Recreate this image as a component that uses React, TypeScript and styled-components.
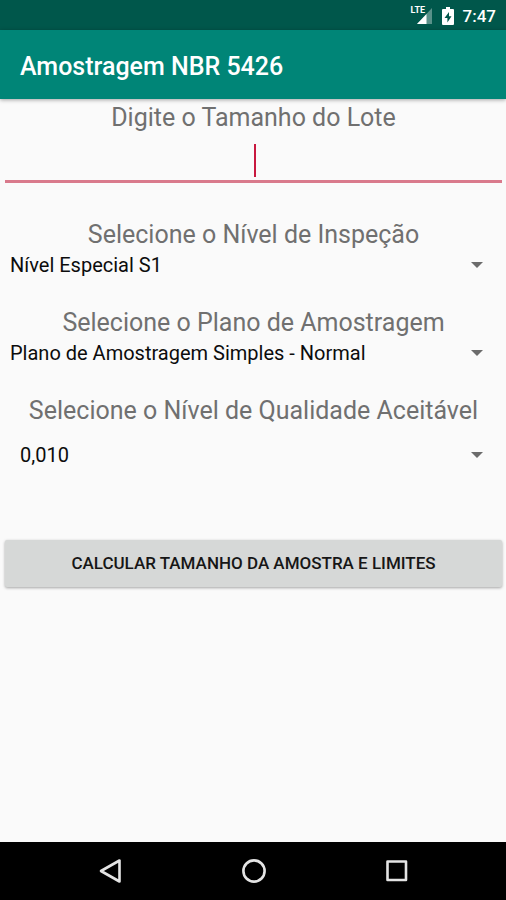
import React, { useState } from "react";
import styled, { createGlobalStyle } from "styled-components";

const GlobalStyle = createGlobalStyle`
  * { box-sizing: border-box; }
  body { margin: 0; background: #fafafa; font-family: Roboto, sans-serif; }
  button, input, select { font-family: inherit; margin: 0; }
`;

const Screen = styled.div`
  min-height: 100vh;
  display: flex;
  flex-direction: column;
`;

const StatusBar = styled.div`
  height: 30px;
  padding: 2px 10px 0;
  display: flex;
  align-items: center;
  justify-content: flex-end;
  gap: 9px;
  background: #00574b;
  color: #fff;
`;

const Clock = styled.time`
  font-size: 17px;
  line-height: 28px;
  font-weight: 500;
`;

const AppBar = styled.header`
  height: 69px;
  padding: 4px 20px 0;
  display: flex;
  align-items: center;
  background: #008577;
  box-shadow: 0 1px 4px rgba(0, 0, 0, 0.35);
`;

const Title = styled.h1`
  margin: 0;
  color: #fff;
  font-size: 25px;
  line-height: 32px;
  font-weight: 500;
`;

const Form = styled.form`
  flex: 1;
  display: flex;
  flex-direction: column;
  gap: 28px;
  padding: 3px 4px 0 5px;
`;

const Field = styled.div`
  display: flex;
  flex-direction: column;
`;

const Label = styled.label`
  color: #707070;
  font-size: 25px;
  line-height: 32px;
  text-align: center;
`;

const InputWrap = styled.div`
  position: relative;
  margin-bottom: 8px;
`;

const Input = styled.input`
  display: block;
  width: 100%;
  height: 49px;
  border: 0;
  border-bottom: 3px solid #d97a8c;
  outline: 0;
  background: transparent;
  color: #000;
  caret-color: transparent;
  font-size: 22px;
  text-align: center;
`;

const Caret = styled.span`
  position: absolute;
  top: 10px;
  left: 50%;
  width: 2px;
  height: 33px;
  background: #c8183f;
  pointer-events: none;
`;

const SelectWrap = styled.div<{ $tall?: boolean }>`
  position: relative;
  display: flex;
  align-items: center;
  height: ${(p) => (p.$tall ? "56px" : "28px")};
`;

const Select = styled.select<{ $inset?: boolean }>`
  appearance: none;
  width: 100%;
  height: 100%;
  padding: 0 40px 0 ${(p) => (p.$inset ? "15px" : "5px")};
  border: 0;
  outline: 0;
  background: transparent;
  color: #0c0c0c;
  font-size: 20px;
`;

const Arrow = styled.svg`
  position: absolute;
  right: 19px;
  width: 12px;
  height: 6px;
  fill: #6b6b6b;
  pointer-events: none;
`;

const Submit = styled.button`
  height: 47px;
  margin-top: 29px;
  padding: 0 8px 2px;
  border: 0;
  border-radius: 2px;
  background: #d6d8d7;
  box-shadow: 0 1px 3px rgba(0, 0, 0, 0.35);
  color: #161616;
  font-size: 17px;
  font-weight: 500;
  text-transform: uppercase;
`;

const NavBar = styled.nav`
  height: 58px;
  padding: 0 38px 0 40px;
  display: grid;
  grid-template-columns: repeat(3, 1fr);
  background: #000;
`;

const NavButton = styled.button`
  display: flex;
  align-items: center;
  justify-content: center;
  padding: 0;
  border: 0;
  background: transparent;

  svg {
    fill: none;
    stroke: #e4e4e4;
    stroke-width: 2.6;
    stroke-linejoin: round;
  }
`;

const StatusIcon = styled.svg`
  display: block;
`;

type PickerProps = { id: string; label: string; options: string[]; tall?: boolean };

function Picker({ id, label, options, tall }: PickerProps) {
  return (
    <Field>
      <Label htmlFor={id}>{label}</Label>
      <SelectWrap $tall={tall}>
        <Select id={id} $inset={tall}>
          {options.map((o) => (
            <option key={o}>{o}</option>
          ))}
        </Select>
        <Arrow viewBox="0 0 12 6" aria-hidden="true">
          <path d="M0 0h12L6 6z" />
        </Arrow>
      </SelectWrap>
    </Field>
  );
}

const NetworkType = styled.span`
  position: absolute;
  top: -1px;
  left: 0;
  font-size: 9px;
  line-height: 10px;
  font-weight: 700;
`;

const Signal = styled.span`
  position: relative;
  display: block;
`;

export default function App() {
  const [lot, setLot] = useState("");
  return (
    <>
      <GlobalStyle />
      <Screen>
        <StatusBar>
          <Signal>
            <StatusIcon width="22" height="20" viewBox="0 0 22 20" aria-hidden="true">
              <path d="M21 2v16H6z" fill="#fff" opacity="0.35" />
              <path d="M15.500 8V18H6z" fill="#fff" />
            </StatusIcon>
            <NetworkType>LTE</NetworkType>
          </Signal>
          <StatusIcon width="12" height="19" viewBox="0 0 12 19" aria-label="Bateria">
            <path
              fillRule="evenodd"
              fill="#fff"
              d="M4 0h4v2h3q1 0 1 1v14q0 1-1 1H1q-1 0-1-1V3q0-1 1-1h3zM7 5L2.500 11H5.400V15.500L9.500 9.300H7z"
            />
          </StatusIcon>
          <Clock>7:47</Clock>
        </StatusBar>
        <AppBar>
          <Title>Amostragem NBR 5426</Title>
        </AppBar>
        <Form onSubmit={(e) => e.preventDefault()}>
          <Field>
            <Label htmlFor="lote">Digite o Tamanho do Lote</Label>
            <InputWrap>
              <Input
                id="lote"
                inputMode="numeric"
                value={lot}
                onChange={(e) => setLot(e.target.value)}
              />
              {lot === "" && <Caret />}
            </InputWrap>
          </Field>
          <Picker id="nivel" label="Selecione o Nível de Inspeção" options={["Nível Especial S1"]} />
          <Picker
            id="plano"
            label="Selecione o Plano de Amostragem"
            options={["Plano de Amostragem Simples - Normal"]}
          />
          <Picker id="nqa" label="Selecione o Nível de Qualidade Aceitável" options={["0,010"]} tall />
          <Submit type="submit">Calcular tamanho da amostra e limites</Submit>
        </Form>
        <NavBar>
          <NavButton type="button" aria-label="Voltar">
            <svg width="24" height="26" viewBox="0 0 24 26">
              <path d="M20.500 2.500v21L2 13z" />
            </svg>
          </NavButton>
          <NavButton type="button" aria-label="Início">
            <svg width="26" height="26" viewBox="0 0 26 26">
              <circle cx="13" cy="13" r="10.600" />
            </svg>
          </NavButton>
          <NavButton type="button" aria-label="Recentes">
            <svg width="24" height="24" viewBox="0 0 24 24">
              <rect x="2.500" y="2.500" width="18.500" height="18.500" />
            </svg>
          </NavButton>
        </NavBar>
      </Screen>
    </>
  );
}
